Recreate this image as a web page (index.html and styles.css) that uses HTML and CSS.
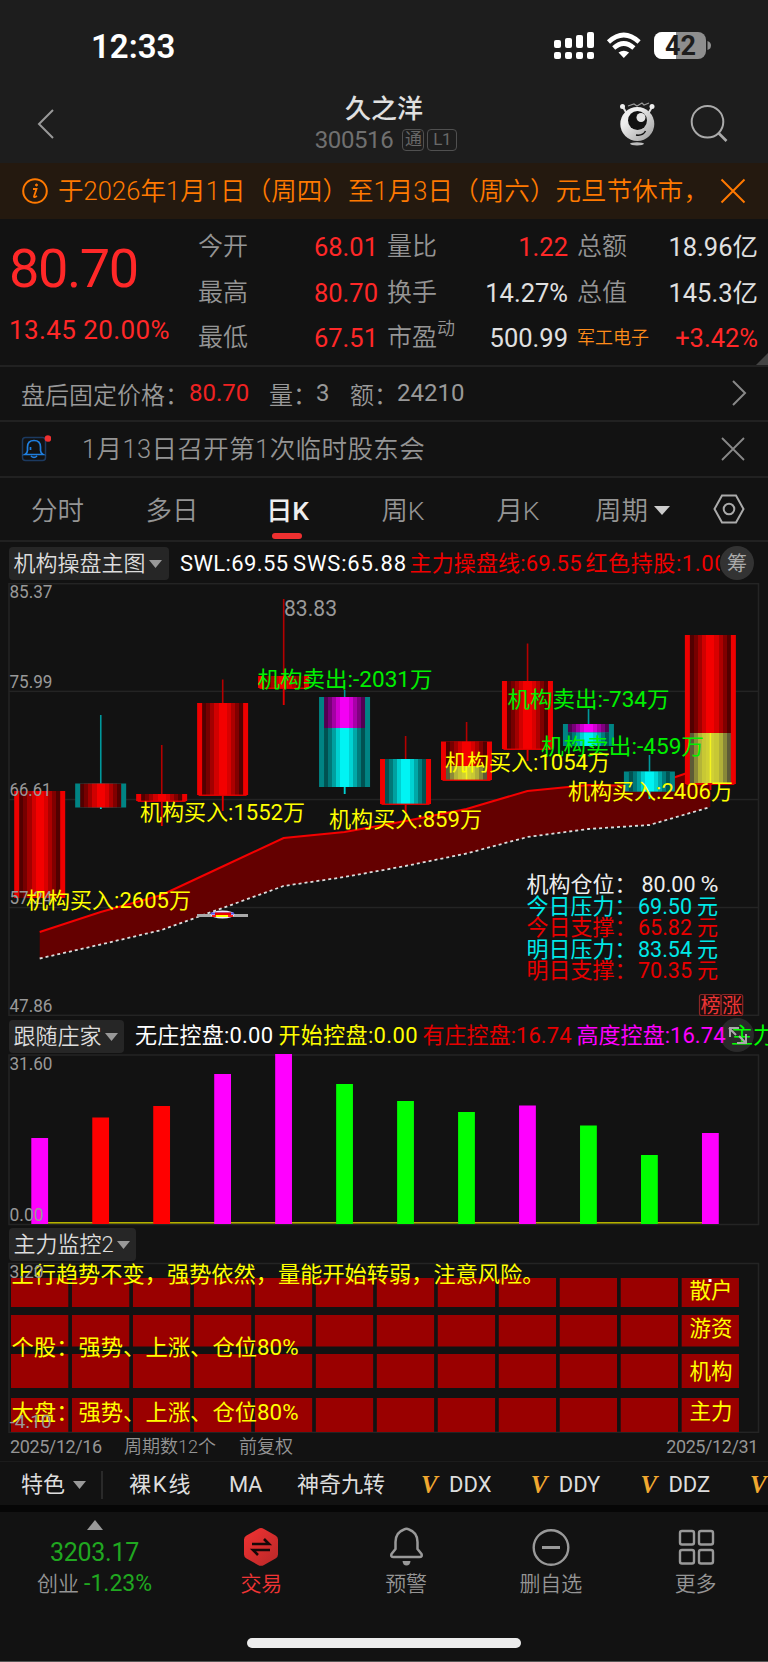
FILE: index.html
```html
<!DOCTYPE html>
<html lang="zh-CN">
<head>
<meta charset="utf-8">
<meta name="viewport" content="width=device-width">
<title>久之洋 300516</title>
<link rel="stylesheet" href="styles.css">
</head>
<body>
<div class="app">
  <div class="status">
    <span class="clock">12:33</span>
    <svg class="status-icons" width="160" height="28" viewBox="552 32 160 28">
      <g fill="#fff">
        <rect x="553" y="40" width="7" height="8" rx="2"/><rect x="564" y="38" width="7" height="10" rx="2"/><rect x="575" y="35" width="7" height="13" rx="2"/><rect x="586" y="32" width="7" height="16" rx="2"/>
        <rect x="553" y="52" width="7" height="7" rx="2"/><rect x="564" y="52" width="7" height="7" rx="2"/><rect x="575" y="52" width="7" height="7" rx="2"/><rect x="586" y="52" width="7" height="7" rx="2"/>
        <path d="M617.5 52.5q5.300-3.700 10.600 0l-5.300 5.500z"/>
      </g>
      <path d="M607.500 42q15.300-14 30.600 0M612.700 48q10.100-9 20.200 0" fill="none" stroke="#fff" stroke-width="4.600"/>
      <rect x="653" y="32" width="52" height="27" rx="8" fill="#8e8e8e"/>
      <path d="M661 32h14v27h-14a8 8 0 0 1-8-8v-11a8 8 0 0 1 8-8z" fill="#fff"/>
      <path d="M706.500 41q3.500 1 3.500 4.500t-3.500 4.500z" fill="#8e8e8e"/>
      <text x="664" y="54.500" class="battery" textLength="31" lengthAdjust="spacingAndGlyphs">42</text>
    </svg>
  </div>

  <header class="header">
    <svg class="back" width="20" height="32" viewBox="0 0 20 32"><path d="M17 2 3 16l14 14" fill="none" stroke="#999" stroke-width="2"/></svg>
    <div class="titles">
      <h1>久之洋</h1>
      <div class="code"><span>300516</span><b>通</b><b class="l1">L1</b></div>
    </div>
    <svg class="robot" width="38" height="46" viewBox="617 101 38 46">
      <defs><linearGradient id="ball" x1="0" y1="0" x2="1" y2="1"><stop offset=".3" stop-color="#eee"/><stop offset="1" stop-color="#999"/></linearGradient></defs>
      <path d="M622 107l4 7M651 107l-4 7" stroke="#ddd" stroke-width="2"/>
      <circle cx="621.500" cy="106.500" r="2.500" fill="#eee"/><circle cx="651" cy="106.500" r="2.500" fill="#eee"/>
      <path d="M627 106l6-2 3 2 5-3 2 2 5-2" fill="none" stroke="#999" stroke-width="1.200"/>
      <circle cx="636.300" cy="124" r="17" fill="url(#ball)"/>
      <circle cx="636.500" cy="120.500" r="9.500" fill="#111"/><circle cx="640" cy="117.500" r="4.500" fill="#e4e4e4"/>
      <path d="M635 135q7 1 9.500-4" fill="none" stroke="#111" stroke-width="1.500"/>
      <ellipse cx="636" cy="143.800" rx="7" ry="1.600" fill="#bbb"/>
    </svg>
    <svg class="search" width="38" height="38" viewBox="689 104 38 38" fill="none" stroke="#aaa" stroke-width="2"><circle cx="706.500" cy="121.800" r="15.800"/><path d="M717.500 133l8 8" stroke-width="2.600"/></svg>
  </header>

  <div class="notice">
    <svg class="info" width="26" height="26" viewBox="0 0 26 26" fill="none" stroke="#ff7900" stroke-width="2"><circle cx="13" cy="13" r="11.800"/><path d="M11 11h3.500l-2.500 7.500q0 1.500 3-.5" stroke-width="1.800"/><circle cx="14.500" cy="7" r="1" fill="#ff7900" stroke-width="1"/></svg>
    <span>于2026年1月1日（周四）至1月3日（周六）元旦节休市，</span>
    <svg class="x" width="26" height="26" viewBox="0 0 26 26"><path d="M1.500 1.500l23 23M24.500 1.500l-23 23" stroke="#ff7900" stroke-width="2"/></svg>
  </div>

  <section class="quote">
    <div class="last"><div class="price">80.70</div><div class="change">13.45 20.00%</div></div>
    <dl class="col c1"><div><dt>今开</dt><dd class="up">68.01</dd></div><div><dt>最高</dt><dd class="up">80.70</dd></div><div><dt>最低</dt><dd class="up">67.51</dd></div></dl>
    <dl class="col c2"><div><dt>量比</dt><dd class="up">1.22</dd></div><div><dt>换手</dt><dd>14.27%</dd></div><div><dt>市盈<i>动</i></dt><dd>500.99</dd></div></dl>
    <dl class="col c3"><div><dt>总额</dt><dd>18.96亿</dd></div><div><dt>总值</dt><dd>145.3亿</dd></div><div><dt class="sector">军工电子</dt><dd class="up">+3.42%</dd></div></dl>
    <svg class="corner" width="12" height="12"><path d="M12 0v12H0z" fill="#444"/></svg>
  </section>

  <div class="after">
    <span class="a1">盘后固定价格：</span><span class="a2">80.70</span><span class="a3">量：</span><span class="a4">3</span><span class="a5">额：</span><span>24210</span>
    <svg class="go" width="16" height="28" viewBox="0 0 16 28"><path d="M2 2l12 12L2 26" fill="none" stroke="#888" stroke-width="2"/></svg>
  </div>

  <div class="event">
    <svg width="30" height="30" viewBox="21 433 30 30" fill="none">
      <rect x="22.500" y="437.500" width="23" height="23" rx="3" stroke="#1c3a60" stroke-width="1.500"/>
      <path d="M25 454.500h18q-2.500-1.500-2.500-4v-3.500q0-6.500-6.500-6.500t-6.500 6.500v3.500q0 2.500-2.500 4zM31 456q3 3 6 0M30.500 447v3" stroke="#1f7fe0" stroke-width="1.700"/>
      <circle cx="48" cy="438.500" r="3.300" fill="#ee3030"/>
    </svg>
    <span>1月13日召开第1次临时股东会</span>
    <svg class="x" width="24" height="24" viewBox="0 0 24 24"><path d="M1 1l22 22M23 1L1 23" stroke="#888" stroke-width="1.800"/></svg>
  </div>

  <nav class="tabs">
    <span>分时</span><span>多日</span><span class="on">日K</span><span>周K</span><span>月K</span><span class="period">周期<svg width="16" height="9"><path d="M0 0h16L8 9z" fill="#ccc"/></svg></span>
    <svg class="hex" width="32" height="30" viewBox="0 0 32 30" fill="none" stroke="#aaa" stroke-width="2"><path d="M1.500 15L9 1.500h14L30.500 15 23 28.500H9z"/><circle cx="16" cy="15" r="5.300"/></svg>
  </nav>

  <div class="legend main-legend">
    <button class="b1">机构操盘主图<svg width="13" height="8"><path d="M0 0h13L6.500 8z" fill="#999"/></svg></button>
    <svg class="values" width="540" height="34" viewBox="180 547 540 34">
      <g class="t">
        <text x="180" y="571" fill="#fff" textLength="108">SWL:69.55</text><text x="293" y="571" fill="#fff" textLength="113">SWS:65.88</text>
        <text x="409.500" y="571" fill="#f00000" textLength="172">主力操盘线:69.55</text><text x="585.500" y="571" fill="#f00000" textLength="141">红色持股:1.00</text>
      </g>
    </svg>
    <span class="round">筹</span>
  </div>

  <svg id="kline" class="panel" width="768" height="433" viewBox="0 583 768 433"></svg>

  <div class="legend follow-legend">
    <button class="b2">跟随庄家<svg width="13" height="8"><path d="M0 0h13L6.500 8z" fill="#999"/></svg></button>
    <span class="round under"></span>
    <svg class="values wide" width="634" height="34" viewBox="134 1020 634 34">
      <g class="t">
        <text x="135" y="1043" fill="#fff" textLength="138">无庄控盘:0.00</text><text x="278.500" y="1043" fill="#ff0" textLength="139">开始控盘:0.00</text>
        <text x="422.500" y="1043" fill="#e60000" textLength="149">有庄控盘:16.74</text><text x="576.500" y="1043" fill="#f0f" textLength="149">高度控盘:16.74</text><text x="731" y="1043" fill="#0f0" textLength="88">主力控盘</text>
      </g>
      <path d="M730 1037v-9h9M729 1028l7 7M746 1034v9h-9M746 1043l-7-7" fill="none" stroke="#aaa" stroke-width="2"/>
    </svg>
  </div>

  <svg id="follow" class="panel" width="768" height="172" viewBox="0 1054 768 172"></svg>

  <div class="legend monitor-legend"><button class="b3">主力监控2<svg width="13" height="8"><path d="M0 0h13L6.500 8z" fill="#999"/></svg></button></div>

  <svg id="monitor" class="panel" width="768" height="171" viewBox="0 1262 768 171"></svg>

  <div class="dates"><span class="d1">2025/12/16</span><span class="d2">周期数12个</span><span class="d3">前复权</span><span class="d4">2025/12/31</span></div>

  <div class="tools">
    <span class="k1">特色<svg width="13" height="8"><path d="M0 0h13L6.500 8z" fill="#999"/></svg></span>
    <span class="k2">裸K线</span><span class="k3">MA</span><span class="k4">神奇九转</span>
    <span class="vip"><i>V</i>DDX</span><span class="vip"><i>V</i>DDY</span><span class="vip"><i>V</i>DDZ</span><span class="vip"><i>V</i></span>
  </div>

  <footer class="bottom">
    <div class="index"><svg width="16" height="10"><path d="M8 0l8 10H0z" fill="#999"/></svg><strong>3203.17</strong><p>创业 <em>-1.23%</em></p></div>
    <div class="act red">
      <svg width="38" height="40" viewBox="243 1527 38 40"><defs><linearGradient id="hexred" x2="1" y2="1"><stop stop-color="#f23232"/><stop offset="1" stop-color="#b82828"/></linearGradient></defs><path d="M262 1528q1.500 0 3 1l11.500 6.500q2.500 1.500 2.500 4v15q0 2.500-2.500 4l-11.500 6.500q-3 1.700-6 0l-11.500-6.500q-2.500-1.500-2.500-4v-15q0-2.500 2.500-4l11.500-6.500q1.500-1 3-1z" fill="url(#hexred)"/><path d="M253 1544h17l-5-5M271 1550h-17l5 5" fill="none" stroke="#160808" stroke-width="2.600"/></svg>
      <span>交易</span></div>
    <div class="act"><svg width="38" height="40" viewBox="387 1527 38 40" fill="none" stroke="#999" stroke-width="2.500"><path d="M404 1529.500q2.500-1.500 5 0 8.500 3 8.500 12.500v7l4 5q1 3-2 3h-26q-3 0-2-3l4-5v-7q0-9.500 8.500-12.500z" stroke-linejoin="round"/><path d="M402.500 1561h8q-.5 4.500-4 4.500t-4-4.500z" fill="#999" stroke="none"/></svg><span>预警</span></div>
    <div class="act"><svg width="38" height="40" viewBox="532 1527 38 40" fill="none" stroke="#999" stroke-width="2.400"><circle cx="551" cy="1547.500" r="17.300"/><path d="M542 1547.500h18" stroke-width="3"/></svg><span>删自选</span></div>
    <div class="act"><svg width="38" height="40" viewBox="676 1527 38 40" fill="none" stroke="#999" stroke-width="2.400"><rect x="679" y="1531" width="14" height="13.500" rx="2"/><rect x="698" y="1531" width="14" height="13.500" rx="2"/><rect x="679" y="1550" width="14" height="13.500" rx="2"/><rect x="698" y="1550" width="14" height="13.500" rx="2"/></svg><span>更多</span></div>
  </footer>
  <div class="home"><div></div></div>
</div>
<script src="charts.js"></script>
</body>
</html>
```
FILE: styles.css
```css
* { box-sizing: border-box; margin: 0; padding: 0; }
body { background: #121212; color: #e0e0e0; font-family: Roboto, "Noto Sans CJK SC", sans-serif; font-weight: 400; }
svg { display: block; flex: none; }
.app { width: 768px; height: 1662px; overflow: hidden; display: flex; flex-direction: column; white-space: nowrap; }
.app > * { flex: none; }
i, em { font-style: normal; }

.status { height: 90px; background: #1d1d1d; display: flex; align-items: flex-start; padding: 27px 55px 0 91px; }
.clock { color: #fff; font-size: 33px; font-weight: 600; line-height: 40px; }
.status-icons { margin: 5px 0 0 auto; }
.battery { font-size: 28px; font-weight: 700; fill: #1d1d1d; }

.header { height: 73px; background: #1d1d1d; display: flex; padding-left: 36px; }
.back { margin-top: 18px; }
.titles { width: 563px; padding-left: 93px; display: flex; flex-direction: column; align-items: center; }
.titles h1 { font-size: 26px; font-weight: 500; line-height: 36px; margin-top: 1px; }
.code { display: flex; align-items: center; height: 26px; margin-left: 4px; color: #707070; font-size: 24px; letter-spacing: -.4px; }
.code b { margin-left: 9px; width: 22px; height: 22px; border: 1.500px solid #505050; border-radius: 4px; font: 400 17px/19px Roboto, "Noto Sans CJK SC", sans-serif; color: #686868; text-align: center; }
.code .l1 { width: 30px; margin-left: 3px; }
.robot { margin: 11px 0 0 -1px; }
.search { margin: 14px 0 0 34px; }

.notice { height: 56px; background: #24190f; color: #ff7900; display: flex; align-items: center; padding-left: 22px; font-size: 25.500px; font-weight: 350; }
.notice span { width: 649px; margin-left: 10px; overflow: hidden; line-height: 40px; letter-spacing: .08px; }
.notice .x { margin-left: 13px; }

.quote { position: relative; height: 148px; border-bottom: 2px solid #212121; display: flex; }
.last { width: 198px; padding: 22px 0 0 9px; color: #ff2828; }
.price { font-size: 54px; line-height: 56px; letter-spacing: -1.400px; font-weight: 400; }
.change { font-size: 26px; line-height: 32px; margin-top: 17px; letter-spacing: .4px; }
.col { padding-top: 5.500px; }
.col div { height: 45.500px; display: flex; justify-content: space-between; align-items: center; }
.c1 { width: 180px; } .c2 { width: 181px; margin-left: 9px; } .c3 { width: 181px; margin-left: 9px; }
dt { font-size: 25px; font-weight: 350; color: #959595; line-height: 40px; display: flex; }
dt i { font-size: 18px; line-height: 22px; }
dt.sector { font-size: 18px; color: #ff8c1a; }
dd { font-size: 25.500px; line-height: 40px; }
.up { color: #ff2828; }
.corner { position: absolute; right: 0; bottom: 0; }

.after { height: 55px; border-bottom: 2px solid #212121; display: flex; align-items: center; padding: 0 21px 1px 21px; color: #999; font-size: 24px; }
.a1, .a3, .a5 { font-weight: 350; }
.a1 { width: 168px; } .a2 { color: #f02222; width: 80px; } .a3 { width: 47px; } .a4 { width: 34px; } .a5 { width: 47px; }
.after .go { margin-left: auto; }

.event { height: 56px; border-bottom: 2px solid #212121; display: flex; align-items: center; padding: 0 23px 0 21px; color: #959595; font-size: 25.500px; font-weight: 350; }
.event > svg:first-child { margin-bottom: 3px; }
.event span { margin-left: 31px; line-height: 40px; margin-bottom: 1px; letter-spacing: .4px; }
.event .x { margin: 0 0 1px auto; }

.tabs { height: 64px; border-bottom: 2px solid #212121; display: grid; grid-template-columns: 115px 114px 117px 114px 116px 137px 55px; align-items: center; color: #959595; font-size: 26.500px; font-weight: 350; text-align: center; line-height: 62px; }
.tabs > span { padding-top: 3px; height: 62px; line-height: 60px; }
.tabs .on { color: #eee; position: relative; font-weight: 500; }
.tabs .on::after { content: ""; position: absolute; left: 43px; bottom: 1px; width: 30px; height: 6px; border-radius: 3px; background: #ee3030; }
.tabs .period { display: flex; align-items: center; gap: 6px; padding-left: 19px; }

.legend { position: relative; display: flex; align-items: flex-start; }
.main-legend { height: 41px; padding: 5px 0 0 9px; }
.legend button { height: 33px; border: 0; border-radius: 4px; background: #262626; color: #ddd; font: 350 22px/31px Roboto, "Noto Sans CJK SC", sans-serif; display: flex; align-items: center; gap: 3px; padding-left: 4.500px; }
.b1 { width: 160px; } .b2 { width: 115px; } .b3 { width: 127px; }
.values { margin-left: 11px; }
.wide { margin-left: 10px; }
.round { position: absolute; left: 720px; top: 4px; width: 34px; height: 34px; border-radius: 50%; background: #333; color: #aaa; font: 400 20px/33px "Noto Sans CJK SC", sans-serif; text-align: center; }
.follow-legend { height: 38px; padding: 4px 0 0 9px; }
.follow-legend .under { top: 2px; background: #2a2a2a; }
.follow-legend .values { position: relative; }
.monitor-legend { height: 36px; padding: 2px 0 0 9px; }
.t { font-size: 22px; }

.panel text { font-size: 22px; font-weight: 400; }
.panel .axis { font-size: 18px; fill: #999; }
.panel .stamp { font-size: 20px; fill: #ee3535; }

.dates { height: 28px; display: flex; align-items: center; font-size: 18px; color: #959595; font-weight: 350; padding: 0 10px 1px 10px; line-height: 24px; }
.d1 { width: 114px; } .d2 { width: 115px; }
.d1, .d4 { font-weight: 400; letter-spacing: -.4px; }
.d4 { margin-left: auto; }
.tools { height: 44px; border-top: 1px solid #1c1c1c; display: flex; align-items: center; overflow: hidden; padding: 3px 0 0 21px; font-size: 22px; line-height: 30px; color: #ddd; }
.tools > * { flex: none; }
.k1 { display: flex; align-items: center; gap: 8px; width: 82px; height: 28px; border-right: 2px solid #2a2a2a; }
.k2 { margin-left: 26px; width: 100px; letter-spacing: 1.800px; } .k3 { width: 68px; letter-spacing: -.5px; } .k4 { width: 124px; }
.vip { display: flex; width: 109.700px; }
.vip i { font: italic 700 25px/30px "Liberation Serif", serif; color: #f0a830; width: 28px; }

.bottom { height: 122px; border-top: 7px solid #060606; display: grid; grid-template-columns: 189px repeat(4, 144.750px); color: #959595; font-weight: 350; }
.index { display: flex; flex-direction: column; align-items: center; padding-top: 8px; }
.index strong { color: #20a820; font-size: 25px; font-weight: 400; line-height: 30px; margin-top: 8px; letter-spacing: -.3px; }
.index p { font-size: 21px; line-height: 32px; margin-top: 0; }
.index em { color: #20a820; font-size: 23px; font-weight: 400; }
.act { display: flex; flex-direction: column; align-items: center; padding-top: 15px; }
.act span { font-size: 21px; line-height: 32px; margin-top: 1px; }
.act.red { color: #f03535; }
.home { flex: 1; display: flex; justify-content: center; align-items: flex-start; padding-top: 11px; border-bottom: 1px solid #555; }
.home div { width: 274px; height: 10px; border-radius: 5px; background: #ececec; }
```
FILE: charts.js
```js
const NS = 'http://www.w3.org/2000/svg';
const centre = i => 39.7 + i * 60.97;

function add(parent, tag, attrs, text) {
  const el = document.createElementNS(NS, tag);
  for (const k in attrs) el.setAttribute(k, attrs[k]);
  if (text !== undefined) el.textContent = text;
  parent.appendChild(el);
  return el;
}
function rect(p, x, y, w, h, fill) {
  return add(p, 'rect', { x, y, width: w, height: h, fill });
}
function label(p, x, y, w, fill, text) {
  return add(p, 'text', { x, y, fill, textLength: w, lengthAdjust: 'spacingAndGlyphs' }, text);
}
function axis(p, y, text, w) {
  return add(p, 'text', { x: 9.5, y, class: 'axis', textLength: w, lengthAdjust: 'spacingAndGlyphs' }, text);
}
function frame(p, top, bottom) {
  add(p, 'rect', { x: 9, y: top, width: 749.5, height: bottom - top, fill: 'none', stroke: '#242424', 'stroke-width': 1.5 });
}

/* Cylinder shading: hard-edged vertical stripes, bright in the middle */
const shades = {
  red: ['#520000', '#760000', '#a20000', '#d00000', '#f40000', '#f40000', '#d80000', '#ac0000', '#800000', '#520000'],
  cyan: ['#005252', '#007878', '#00a0a0', '#00d0d0', '#00f4f4', '#00f4f4', '#00d4d4', '#00a8a8', '#007c7c', '#005252'],
  magenta: ['#520052', '#780078', '#a400a4', '#d000d0', '#f400f4', '#f400f4', '#d400d4', '#a800a8', '#800080', '#520052'],
  olive: ['#5c5a36', '#8c8a38', '#b4b438', '#c8c834', '#d0d034', '#d0d034', '#c8c834', '#b0b038', '#888838', '#5c5a36']
};
const kline = document.getElementById('kline');
const defs = add(kline, 'defs', {});
for (const name in shades) {
  const g = add(defs, 'linearGradient', { id: name });
  shades[name].forEach((c, i) => {
    add(g, 'stop', { offset: i / 10, 'stop-color': c });
    add(g, 'stop', { offset: (i + 1) / 10, 'stop-color': c });
  });
}

frame(kline, 583.7, 1015.3);
for (const y of [691.3, 799.5, 907.5]) rect(kline, 9, y - .7, 749, 1.5, '#242424');

const upper = [932, 912, 895, 866.5, 838, 832, 821, 809, 791, 785, 786, 765];
const lower = [958.5, 944.5, 930, 908, 886, 877, 866, 853.5, 837, 829, 825, 807];
const up = upper.map((y, i) => centre(i) + ',' + y);
const low = lower.map((y, i) => centre(i) + ',' + y);
add(kline, 'polygon', { points: up.concat(low.slice().reverse()).join(' '), fill: '#640000' });
add(kline, 'polyline', { points: up.join(' '), fill: 'none', stroke: '#f40000', 'stroke-width': 2 });
add(kline, 'polyline', { points: low.join(' '), fill: 'none', stroke: '#ddd', 'stroke-width': 1.8, 'stroke-dasharray': '3 3' });

const R = '#ee0000', T = '#008484';
/* wick top, top, bottom, wick bottom, edge, body fills as [shade, top, bottom] */
const candles = [
  [791, 791, 898, 898, R, [['red', 791, 898]]],
  [715, 783.5, 807.5, 809, T, [['red', 783.5, 807.5]]],
  [745, 794, 801, 826, R, [['red', 794, 801]]],
  [679.5, 703, 795, 811, R, [['red', 703, 795]]],
  [599, 676, 688, 705, R, [['red', 676, 688]]],
  [690, 697, 787, 794, T, [['magenta', 697, 728], ['cyan', 728, 787]]],
  [736, 759, 804, 813, R, [['cyan', 759, 804]]],
  [722, 741.5, 780, 780, R, [['red', 741.5, 766], ['olive', 766, 780]]],
  [643.5, 681, 749, 761, R, [['red', 681, 749]]],
  [709, 724, 746, 746, T, [['magenta', 724, 732.5], ['cyan', 732.5, 746]]],
  [755, 771.5, 791.5, 799, T, [['cyan', 771.5, 791.5]]],
  [635, 635, 784, 790, R, [['red', 635, 733], ['olive', 733, 783]]]
];
candles.forEach(([wt, t, b, wb, edge, fills], i) => {
  const c = centre(i), wick = edge === R ? '#b40000' : '#00989c';
  rect(kline, c - .7, wt, 1.6, wb - wt, wick);
  rect(kline, c - 25.5, t, 51, b - t, edge);
  fills.forEach(f => {
    rect(kline, c - 20.5, f[1], 41, f[2] - f[1], 'url(#' + f[0] + ')');
    if (f[0] === 'olive') rect(kline, c - .7, f[1], 1.5, f[2] - f[1], '#f4f420');
  });
  if (edge === R && i > 1) rect(kline, c - 24, b - .4, 48, 1.3, edge);
  if (wb > b) rect(kline, c - .7, b, 1.6, wb - b, edge === R ? '#e00000' : '#00d0d0');
});

[[598, '85.37', 43], [687.5, '75.99', 43], [796, '66.61', 42], [904, '57.24', 43], [1011.5, '47.86', 43]]
  .forEach(a => axis(kline, a[0], a[1], a[2]));

rect(kline, 197, 914, 51, 3, '#aaa');
add(kline, 'ellipse', { cx: 222.5, cy: 914.5, rx: 12, ry: 4, fill: '#eeeaff' });
rect(kline, 211, 912.5, 23, 2, '#5050e8');
rect(kline, 215, 912.5, 16, 3, '#e80000');
rect(kline, 212, 915, 21, 2, '#ff2020');
rect(kline, 216, 915, 12, 2, '#ff0');

add(kline, 'text', { x: 284, y: 615.5, fill: '#999', textLength: 53, lengthAdjust: 'spacingAndGlyphs' }, '83.83');
const Y = '#ffff00', G = '#00f000';
[[26, 908, 165, Y, '机构买入:2605万'], [140, 820, 165, Y, '机构买入:1552万'], [329, 827, 153, Y, '机构买入:859万'],
 [257.5, 687, 175, G, '机构卖出:-2031万'], [507.5, 707, 162, G, '机构卖出:-734万'], [541, 754, 163, G, '机构卖出:-459万'],
 [445, 769.5, 165, Y, '机构买入:1054万'], [568, 798.5, 165, Y, '机构买入:2406万']]
  .forEach(a => label(kline, a[0], a[1], a[2], a[3], a[4]));

[['机构仓位', '80.00', '#eee', 641.5, '%'], ['今日压力', '69.50', '#00e8e8', 638, '元'], ['今日支撑', '65.82', '#e80000', 638, '元'],
 ['明日压力', '83.54', '#00e8e8', 638, '元'], ['明日支撑', '70.35', '#e80000', 638, '元']].forEach((r, i) => {
  const y = 892 + i * 21.5;
  label(kline, 526.5, y, 110, r[2], r[0] + '：');
  label(kline, r[3], y, 54, r[2], r[1]);
  label(kline, i ? 697 : 700.5, y, i ? 21 : 18, r[2], r[4]);
});
['榜', '涨'].forEach((s, i) => {
  add(kline, 'rect', { x: 699.5 + i * 21.7, y: 994.5, width: 21.5, height: 21, rx: 2, fill: '#1a0e0e', stroke: '#8c2626', 'stroke-width': 1.2 });
  add(kline, 'text', { x: 700.5 + i * 21.7, y: 1012.5, class: 'stamp' }, s);
});

const follow = document.getElementById('follow');
frame(follow, 1055, 1224.5);
rect(follow, 48, 1222, 660, 1.6, '#b4b000');
const M = '#ff00ff', L = '#00ff00', D = '#ff0000';
[[1138, M], [1117.5, D], [1106, D], [1074, M], [1054, M], [1084, L], [1101, L], [1112, L], [1105.5, M], [1125.5, L], [1155, L], [1133, M]]
  .forEach((b, i) => rect(follow, centre(i) - 8.4, b[0], 16.8, 1224 - b[0], b[1]));
axis(follow, 1069.5, '31.60', 43);
axis(follow, 1220.5, '0.00', 34);

const monitor = document.getElementById('monitor');
frame(monitor, 1263.5, 1432.3);
[[1278, 29], [1315, 31.5], [1354, 34], [1398, 34]].forEach(r => {
  for (let i = 0; i < 12; i++) rect(monitor, 11 + i * 60.97, r[0], 57.3, r[1], '#9a0000');
});
label(monitor, 11.5, 1281.5, 533, Y, '上行趋势不变，强势依然，量能开始转弱，注意风险。');
label(monitor, 11.5, 1355, 287, Y, '个股：强势、上涨、仓位80%');
label(monitor, 11.5, 1419.5, 287, Y, '大盘：强势、上涨、仓位80%');
[['散户', 1298], ['游资', 1336], ['机构', 1379], ['主力', 1419]].forEach(r => label(monitor, 689.5, r[1], 43, Y, r[0]));
rect(monitor, 708.5, 1279, 3, 3, '#fff');
axis(monitor, 1278, '3.20', 34);
axis(monitor, 1428, '-4.10', 42);
```
